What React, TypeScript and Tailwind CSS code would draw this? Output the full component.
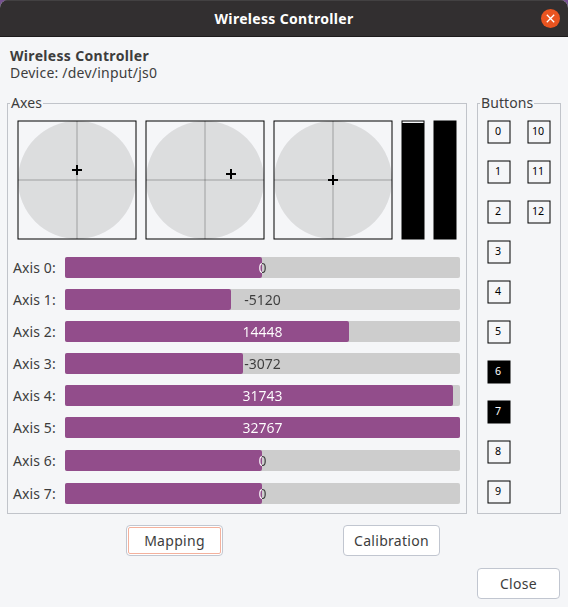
import React from "react";

type Axis = { id: number; value: number; fill: number; gap: string };

const axes: Axis[] = [
  { id: 0, value: 0, fill: 197, gap: "" },
  { id: 1, value: -5120, fill: 166, gap: "mt-[11px]" },
  { id: 2, value: 14448, fill: 284, gap: "mt-[11px]" },
  { id: 3, value: -3072, fill: 178, gap: "mt-[11px]" },
  { id: 4, value: 31743, fill: 388, gap: "mt-[11px]" },
  { id: 5, value: 32767, fill: 395, gap: "mt-[11px]" },
  { id: 6, value: 0, fill: 197, gap: "mt-3" },
  { id: 7, value: 0, fill: 197, gap: "mt-3" },
];

const pads = [
  { x: 60, y: 50 },
  { x: 86, y: 54 },
  { x: 60, y: 60 },
];

const pressed = [6, 7];

function StickPad({ x, y }: { x: number; y: number }) {
  return (
    <svg width="120" height="120" className="block shrink-0">
      <circle cx="60" cy="60" r="59" fill="#000" fillOpacity="0.1" />
      <path d="M60 1V119M1 60H119" stroke="#000" strokeOpacity="0.28" fill="none" />
      <rect x="1" y="1" width="118" height="118" fill="none" stroke="#000" />
      <path d={`M${x - 5} ${y}H${x + 5}M${x} ${y - 5}V${y + 5}`} stroke="#000" strokeWidth="2" />
    </svg>
  );
}

function Trigger({ top }: { top: number }) {
  return (
    <svg width="24" height="120" className="block shrink-0">
      <rect x="1" y={top} width="22" height={119 - top} fill="#000" />
      <rect x="1" y="1" width="22" height="118" fill="none" stroke="#000" />
    </svg>
  );
}

function AxisBar({ axis }: { axis: Axis }) {
  return (
    <div className={`flex h-[21px] items-center ${axis.gap}`}>
      <span className="w-[52px] shrink-0 whitespace-nowrap text-[14px] leading-[21px] tracking-[0.1px]">
        Axis {axis.id}:
      </span>
      <div className="grid h-[21px] w-[395px] rounded-[2px] bg-[#cdcdcd]">
        <div
          className="col-start-1 row-start-1 rounded-[2px] bg-[#924d8b]"
          style={{ width: axis.fill }}
        />
        {/* The value is white over the filled part and dark past it. */}
        <div
          className="col-start-1 row-start-1 bg-clip-text text-center text-[14px] leading-[21px] text-transparent"
          style={{ backgroundImage: `linear-gradient(to right, #fff ${axis.fill}px, #3d3d3d ${axis.fill}px)` }}
        >
          {axis.value}
        </div>
      </div>
    </div>
  );
}

function PadButton({ id }: { id: number }) {
  const on = pressed.includes(id);
  return (
    <div className="grid size-6">
      <svg width="24" height="24" className="col-start-1 row-start-1 block">
        <rect x="1" y="1" width="22" height="22" fill={on ? "#000" : "none"} stroke="#000" />
      </svg>
      <span
        className={`col-start-1 row-start-1 pr-0.5 text-center text-[10.67px] leading-[22px] ${on ? "text-white" : "text-black"}`}
      >
        {id}
      </span>
    </div>
  );
}

function Frame({ title, className, children }: { title: string; className: string; children: React.ReactNode }) {
  return (
    <section className={`relative h-[411px] border border-[#c1c4ca] ${className}`}>
      <h2 className="absolute -top-[12px] left-[2px] bg-[#f5f6f8] px-px text-[14px] leading-[21px] tracking-[0.1px]">
        {title}
      </h2>
      {children}
    </section>
  );
}

const buttonBase =
  "flex h-[31px] items-center justify-center rounded-[4px] border border-[#c1c6d0] bg-white text-[14px] tracking-[0.3px]";

export default function App() {
  return (
    <div className="h-[607px] w-[568px] overflow-hidden bg-[#75508f] font-['Noto_Sans',sans-serif] text-[#3d3d3d]">
      <div className="flex h-full flex-col overflow-hidden rounded-t-[8px] bg-[#f5f6f8]">
        <header className="grid h-[37px] shrink-0 grid-cols-[1fr_auto_1fr] items-center border-t border-b border-t-[#434142] border-b-[#1d1b1c] bg-[#322f30]">
          <span />
          <h1 className="text-[14px] font-bold leading-5 tracking-[0.32px] text-white">Wireless Controller</h1>
          <button className="mr-[8.5px] mb-px flex size-[19px] items-center justify-center justify-self-end rounded-full bg-[#e95420]">
            <svg width="9" height="9" viewBox="0 0 9 9">
              <path d="M0.8 0.8L8.2 8.2M8.2 0.8L0.8 8.2" stroke="#fff" strokeWidth="1.3" />
            </svg>
          </button>
        </header>
        <div className="mt-[10px] h-14 pl-[10px] text-[14px] leading-[17px]">
          <p className="font-bold tracking-[0.32px]">Wireless Controller</p>
          <p className="tracking-[0.22px]">Device: /dev/input/js0</p>
        </div>
        <div className="flex gap-[10px] pl-[7px]">
          <Frame title="Axes" className="w-[460px]">
            <div className="ml-[9px] mt-4 flex gap-2">
              {pads.map((p, i) => (
                <StickPad key={i} x={p.x} y={p.y} />
              ))}
              <Trigger top={3} />
              <Trigger top={1} />
            </div>
            <div className="ml-[5px] mt-[17px]">
              {axes.map((a) => (
                <AxisBar key={a.id} axis={a} />
              ))}
            </div>
          </Frame>
          <Frame title="Buttons" className="w-[84px]">
            <div className="ml-[9px] mt-4 grid w-16 grid-flow-col grid-cols-[24px_24px] grid-rows-10 gap-4">
              {Array.from({ length: 13 }, (_, i) => (
                <PadButton key={i} id={i} />
              ))}
            </div>
          </Frame>
        </div>
        <div className="mt-[11px] flex gap-[120px] pl-[126px]">
          <button className={`${buttonBase} w-[97px] p-px`}>
            <span className="flex size-full items-center justify-center rounded-[2px] border border-[#f4b19d]">Mapping</span>
          </button>
          <button className={`${buttonBase} w-[97px]`}>Calibration</button>
        </div>
        <div className="mt-3 flex justify-end pr-2">
          <button className={`${buttonBase} w-[83px]`}>Close</button>
        </div>
      </div>
    </div>
  );
}
